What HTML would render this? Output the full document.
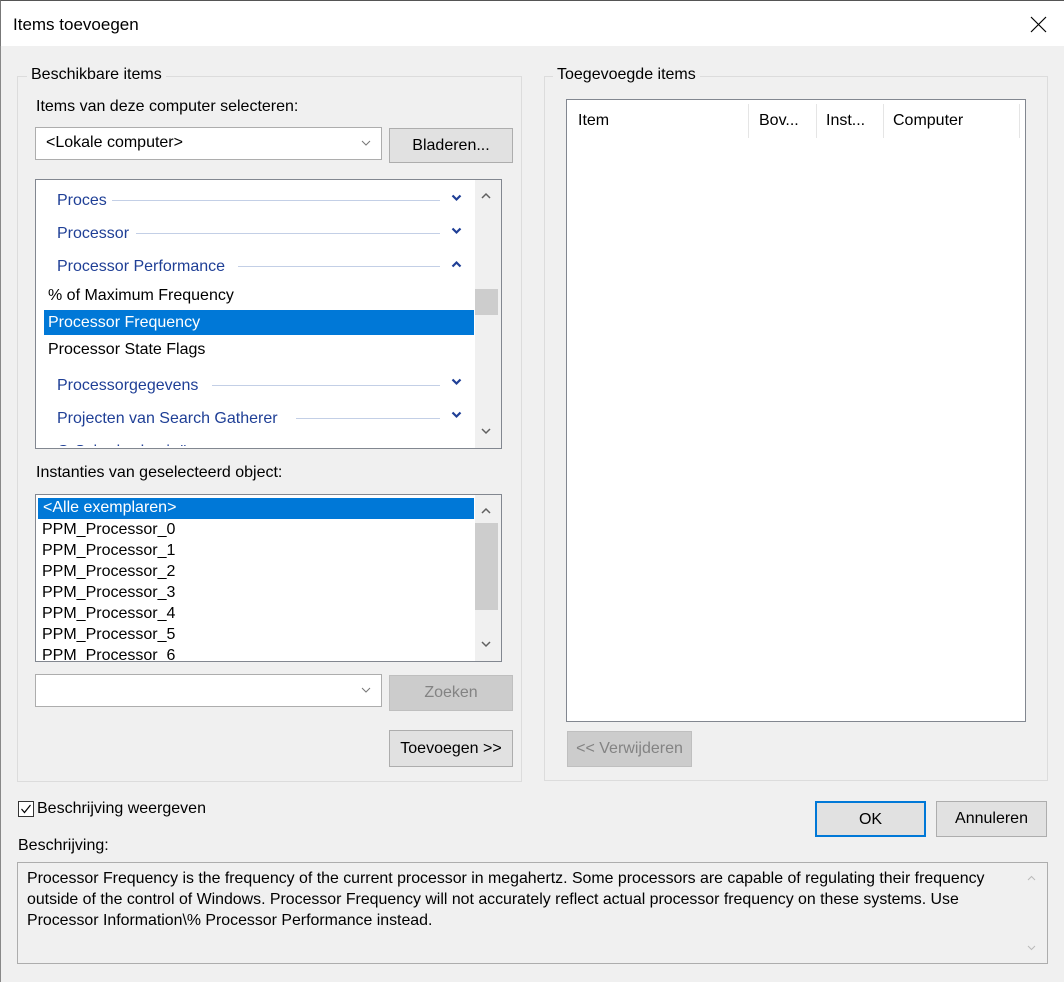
<!DOCTYPE html>
<html><head><meta charset="utf-8"><style>
*{box-sizing:border-box;margin:0;padding:0}
body{width:1064px;height:982px;background:#f0f0f0;font-family:"Liberation Sans",sans-serif;font-size:16px;color:#000;position:relative;overflow:hidden}
.a{position:absolute;white-space:nowrap}
.grp{position:absolute;border:1px solid #dcdcdc}
.lbl{position:absolute;background:#f0f0f0;padding:0 4px;line-height:18px}
.combo{position:absolute;background:#fff;border:1px solid #adadad}
.btn{position:absolute;background:#e1e1e1;border:1px solid #adadad;text-align:center}
.dis{background:#cccccc;border-color:#bfbfbf;color:#838383}
.tv{color:#1f3f96}
.line{position:absolute;height:1px;background:#c3cfe6}
</style></head><body>
<div class="a" style="left:0;top:0;width:1064px;height:46px;background:#fff;border-top:1px solid #555;border-left:1px solid #777"></div>
<div class="a" style="left:0;top:46px;width:1px;height:936px;background:#888"></div>
<div class="a" style="left:13px;top:15px;font-size:17px">Items toevoegen</div>
<svg class="a" style="left:1030px;top:16px" width="17" height="17"><path d="M1 1L16 16M16 1L1 16" stroke="#000" stroke-width="1.2"/></svg>

<div class="grp" style="left:17px;top:76px;width:505px;height:706px"></div>
<div class="lbl" style="left:27px;top:66px">Beschikbare items</div>
<div class="grp" style="left:544px;top:76px;width:504px;height:705px"></div>
<div class="lbl" style="left:553px;top:66px">Toegevoegde items</div>

<div class="a" style="left:36px;top:98px">Items van deze computer selecteren:</div>
<div class="combo" style="left:35px;top:127px;width:347px;height:33px"><span class="a" style="left:10px;top:6px">&lt;Lokale computer&gt;</span>
<svg class="a" style="left:325px;top:12px" width="10" height="7"><path d="M1 1L5 5L9 1" stroke="#777" fill="none"/></svg></div>
<div class="btn" style="left:389px;top:128px;width:124px;height:35px;line-height:33px">Bladeren...</div>

<div class="a" style="left:35px;top:179px;width:467px;height:270px;background:#fff;border:1px solid #828790;overflow:hidden">
 <div class="a" style="left:439px;top:0;width:26px;height:268px;background:#f0f0f0"></div>
 <div class="a" style="left:439px;top:109px;width:23px;height:26px;background:#cdcdcd"></div>
 <svg class="a" style="left:445px;top:12px" width="10" height="7"><path d="M1 6L5 2L9 6" stroke="#606060" stroke-width="1.5" fill="none"/></svg>
 <svg class="a" style="left:445px;top:248px" width="10" height="7"><path d="M1 1L5 5L9 1" stroke="#606060" stroke-width="1.5" fill="none"/></svg>
 <div class="a tv" style="left:21px;top:12px">Proces</div><div class="line" style="left:76px;top:20px;width:328px"></div>
 <div class="a tv" style="left:21px;top:45px">Processor</div><div class="line" style="left:100px;top:53px;width:304px"></div>
 <div class="a tv" style="left:21px;top:78px">Processor Performance</div><div class="line" style="left:202px;top:86px;width:202px"></div>
 <div class="a" style="left:12px;top:107px">% of Maximum Frequency</div>
 <div class="a" style="left:8px;top:130px;width:430px;height:25px;background:#0078d7"></div>
 <div class="a" style="left:12px;top:134px;color:#fff">Processor Frequency</div>
 <div class="a" style="left:12px;top:161px">Processor State Flags</div>
 <div class="a tv" style="left:21px;top:197px">Processorgegevens</div><div class="line" style="left:176px;top:205px;width:228px"></div>
 <div class="a tv" style="left:21px;top:230px">Projecten van Search Gatherer</div><div class="line" style="left:260px;top:238px;width:144px"></div>
 <div class="a tv" style="left:21px;top:263px">Q-Schaduwkopieën</div>
 <svg class="a" style="left:415px;top:14px" width="11" height="8"><path d="M1.5 1.5L5.5 5.5L9.5 1.5" stroke="#1f3f96" stroke-width="2.2" fill="none"/></svg>
 <svg class="a" style="left:415px;top:47px" width="11" height="8"><path d="M1.5 1.5L5.5 5.5L9.5 1.5" stroke="#1f3f96" stroke-width="2.2" fill="none"/></svg>
 <svg class="a" style="left:415px;top:80px" width="11" height="8"><path d="M1.5 6.5L5.5 2.5L9.5 6.5" stroke="#1f3f96" stroke-width="2.2" fill="none"/></svg>
 <svg class="a" style="left:415px;top:198px" width="11" height="8"><path d="M1.5 1.5L5.5 5.5L9.5 1.5" stroke="#1f3f96" stroke-width="2.2" fill="none"/></svg>
 <svg class="a" style="left:415px;top:231px" width="11" height="8"><path d="M1.5 1.5L5.5 5.5L9.5 1.5" stroke="#1f3f96" stroke-width="2.2" fill="none"/></svg>
 <div class="a" style="left:0;top:266px;width:439px;height:4px;background:#fff"></div>
</div>

<div class="a" style="left:36px;top:464px">Instanties van geselecteerd object:</div>
<div class="a" style="left:35px;top:494px;width:467px;height:168px;background:#fff;border:1px solid #828790;overflow:hidden">
 <div class="a" style="left:439px;top:0;width:26px;height:166px;background:#f0f0f0"></div>
 <div class="a" style="left:439px;top:28px;width:23px;height:87px;background:#cdcdcd"></div>
 <svg class="a" style="left:445px;top:12px" width="10" height="7"><path d="M1 6L5 2L9 6" stroke="#606060" stroke-width="1.5" fill="none"/></svg>
 <svg class="a" style="left:445px;top:146px" width="10" height="7"><path d="M1 1L5 5L9 1" stroke="#606060" stroke-width="1.5" fill="none"/></svg>
 <div class="a" style="left:2px;top:3px;width:436px;height:21px;background:#0078d7"></div>
 <div class="a" style="left:7px;top:4px;color:#fff">&lt;Alle exemplaren&gt;</div>
 <div class="a" style="left:6px;top:26px">PPM_Processor_0</div>
 <div class="a" style="left:6px;top:47px">PPM_Processor_1</div>
 <div class="a" style="left:6px;top:68px">PPM_Processor_2</div>
 <div class="a" style="left:6px;top:89px">PPM_Processor_3</div>
 <div class="a" style="left:6px;top:110px">PPM_Processor_4</div>
 <div class="a" style="left:6px;top:131px">PPM_Processor_5</div>
 <div class="a" style="left:6px;top:152px">PPM_Processor_6</div>
</div>
<div class="combo" style="left:35px;top:674px;width:347px;height:33px">
<svg class="a" style="left:325px;top:12px" width="10" height="7"><path d="M1 1L5 5L9 1" stroke="#777" fill="none"/></svg></div>
<div class="btn dis" style="left:389px;top:675px;width:124px;height:36px;line-height:34px">Zoeken</div>
<div class="btn" style="left:389px;top:730px;width:124px;height:37px;line-height:35px">Toevoegen &gt;&gt;</div>

<div class="a" style="left:566px;top:99px;width:460px;height:623px;background:#fff;border:1px solid #828790">
 <div class="a" style="left:11px;top:12px">Item</div>
 <div class="a" style="left:181px;top:4px;width:1px;height:34px;background:#e5e5e5"></div>
 <div class="a" style="left:192px;top:12px">Bov...</div>
 <div class="a" style="left:249px;top:4px;width:1px;height:34px;background:#e5e5e5"></div>
 <div class="a" style="left:259px;top:12px">Inst...</div>
 <div class="a" style="left:316px;top:4px;width:1px;height:34px;background:#e5e5e5"></div>
 <div class="a" style="left:326px;top:12px">Computer</div>
 <div class="a" style="left:452px;top:4px;width:1px;height:34px;background:#e5e5e5"></div>
</div>
<div class="btn dis" style="left:567px;top:731px;width:125px;height:36px;line-height:34px">&lt;&lt; Verwijderen</div>

<div class="a" style="left:18px;top:801px;width:16px;height:16px;background:#fff;border:1px solid #333"></div>
<svg class="a" style="left:20px;top:803px" width="12" height="12"><path d="M1.5 6L4.5 9.5L10.5 2" stroke="#000" stroke-width="1.2" fill="none"/></svg>
<div class="a" style="left:37px;top:800px">Beschrijving weergeven</div>
<div class="btn" style="left:815px;top:801px;width:111px;height:36px;line-height:33px;border:2px solid #0078d7">OK</div>
<div class="btn" style="left:936px;top:801px;width:111px;height:36px;line-height:34px">Annuleren</div>
<div class="a" style="left:18px;top:837px">Beschrijving:</div>
<div class="a" style="left:17px;top:862px;width:1031px;height:102px;border:1px solid #adadad;background:#f0f0f0;font-size:15.9px;line-height:21px">
 <div class="a" style="left:9px;top:5px">Processor Frequency is the frequency of the current processor in megahertz. Some processors are capable of regulating their frequency</div>
 <div class="a" style="left:9px;top:26px">outside of the control of Windows. Processor Frequency will not accurately reflect actual processor frequency on these systems. Use</div>
 <div class="a" style="left:9px;top:47px">Processor Information\% Processor Performance instead.</div>
 <svg class="a" style="left:1009px;top:12px" width="9" height="6"><path d="M1 5L4.5 1.5L8 5" stroke="#bbb" fill="none"/></svg>
 <svg class="a" style="left:1009px;top:82px" width="9" height="6"><path d="M1 1L4.5 4.5L8 1" stroke="#bbb" fill="none"/></svg>
</div>
</body></html>
